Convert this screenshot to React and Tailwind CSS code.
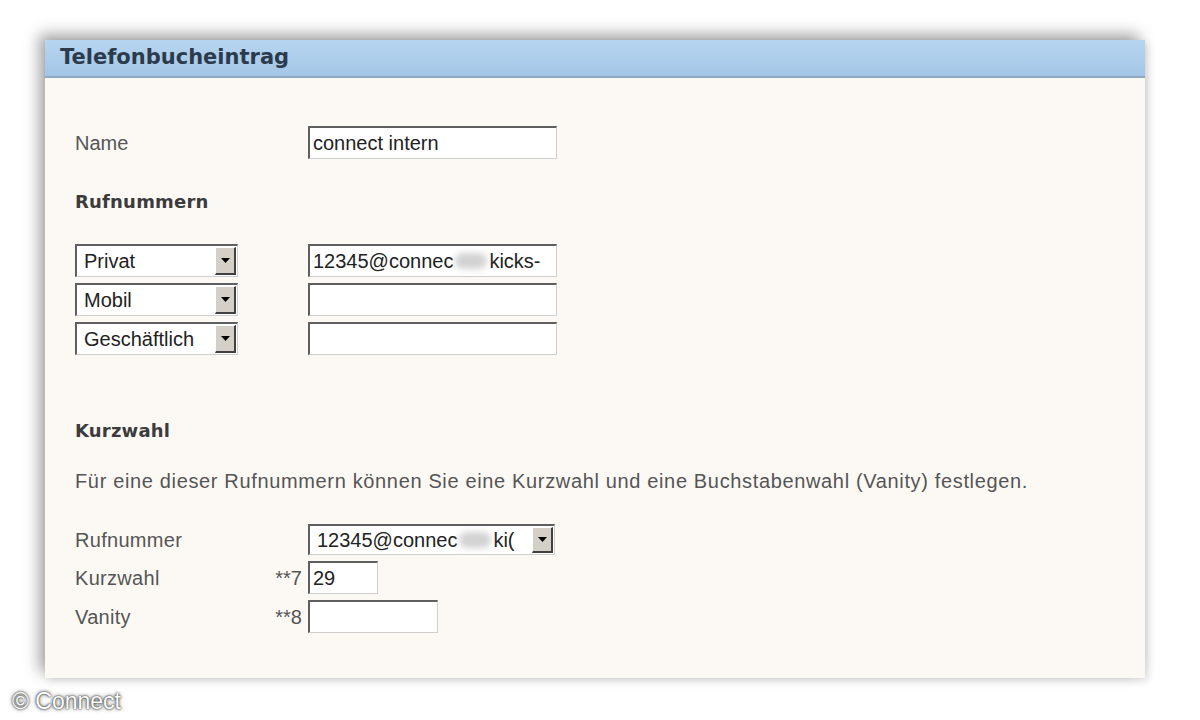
import React from 'react';

const Arrow = () => (
    <div className="w-[21px] self-stretch my-[1px] mr-[1px] bg-[#d4d0c8] border-t border-l border-t-white border-l-white border-r-2 border-b-2 border-r-[#404040] border-b-[#404040] flex items-center justify-center">
        <svg width="9" height="5" viewBox="0 0 9 5">
            <path d="M0 0h9L4.5 5z" fill="#000" />
        </svg>
    </div>
);

const Select = ({ width, height = 'h-[33px]', children }) => (
    <div className={`${width} ${height} flex items-stretch bg-white border-t-2 border-l-2 border-t-[#5f5f5f] border-l-[#5f5f5f] border-r border-b border-r-[#cfcfcf] border-b-[#cfcfcf]`}>
        <div className="flex-1 overflow-hidden whitespace-nowrap pl-[7px] flex items-center text-[20px] text-[#222]">{children}</div>
        <Arrow />
    </div>
);

const Input = ({ width, children }) => (
    <div className={`${width} h-[33px] bg-white border-t-2 border-l-2 border-t-[#5f5f5f] border-l-[#5f5f5f] border-r border-b border-r-[#cfcfcf] border-b-[#cfcfcf] pl-[3px] flex items-center overflow-hidden whitespace-nowrap text-[20px] text-[#222]`}>
        {children}
    </div>
);

const Blur = ({ w }) => (
    <span className={`inline-block ${w} h-[16px] mx-[2px] bg-[#d2d2d2] blur-[3px] rounded-full`}></span>
);

export default function App() {
    return (
        <div className="relative w-[1200px] h-[720px] bg-white overflow-hidden font-['Liberation_Sans',Arial,sans-serif]">
            <div className="pt-[40px] pl-[45px]">
                <div className="w-[1100px] h-[638px] bg-[#fcf9f5] shadow-[-6px_-6px_14px_rgba(0,0,0,0.35),3px_3px_8px_rgba(0,0,0,0.12)]">
                    {/* Header */}
                    <div className="h-[38px] bg-gradient-to-b from-[#b6d5f0] to-[#a3c6e6] border-b-2 border-[#8fa9c2] pl-[15px] flex items-center">
                        <h1 className="font-['DejaVu_Sans',sans-serif] font-bold text-[21px] text-[#2c3b4c]">Telefonbucheintrag</h1>
                    </div>

                    {/* Body */}
                    <div className="pl-[30px] pt-[48px] text-[20px] text-[#555]">
                        <div className="flex items-center">
                            <span className="w-[233px]">Name</span>
                            <Input width="w-[249px]">connect intern</Input>
                        </div>

                        <h2 className="mt-[31px] h-[24px] leading-[24px] font-['DejaVu_Sans',sans-serif] font-bold text-[18px] text-[#3c3c3c] tracking-[0.2px]">Rufnummern</h2>

                        <div className="mt-[30px] flex flex-col gap-[6px]">
                            <div className="flex items-center">
                                <div className="w-[233px]"><Select width="w-[163px]">Privat</Select></div>
                                <Input width="w-[249px]">
                                    <span>12345@connec</span><Blur w="w-[32px]" /><span>kicks-</span>
                                </Input>
                            </div>
                            <div className="flex items-center">
                                <div className="w-[233px]"><Select width="w-[163px]">Mobil</Select></div>
                                <Input width="w-[249px]"></Input>
                            </div>
                            <div className="flex items-center">
                                <div className="w-[233px]"><Select width="w-[163px]">Geschäftlich</Select></div>
                                <Input width="w-[249px]"></Input>
                            </div>
                        </div>

                        <h2 className="mt-[64px] h-[24px] leading-[24px] font-['DejaVu_Sans',sans-serif] font-bold text-[18px] text-[#3c3c3c] tracking-[0.2px]">Kurzwahl</h2>

                        <p className="mt-[26px] h-[24px] leading-[24px] tracking-[0.65px]">Für eine dieser Rufnummern können Sie eine Kurzwahl und eine Buchstabenwahl (Vanity) festlegen.</p>

                        <div className="mt-[31px] flex flex-col gap-[6px]">
                            <div className="flex items-center">
                                <span className="w-[233px] tracking-[0.3px]">Rufnummer</span>
                                <Select width="w-[247px]" height="h-[31px]">
                                    <span>12345@connec</span><Blur w="w-[32px]" /><span>ki(</span>
                                </Select>
                            </div>
                            <div className="flex items-center">
                                <div className="w-[233px] flex justify-between pr-[6px]">
                                    <span className="tracking-[0.3px]">Kurzwahl</span>
                                    <span>**7</span>
                                </div>
                                <Input width="w-[70px]">29</Input>
                            </div>
                            <div className="flex items-center">
                                <div className="w-[233px] flex justify-between pr-[6px]">
                                    <span className="tracking-[0.3px]">Vanity</span>
                                    <span>**8</span>
                                </div>
                                <Input width="w-[130px]"></Input>
                            </div>
                        </div>
                    </div>
                </div>
            </div>

            {/* Watermark */}
            <div className="absolute left-[12px] top-[684px] text-[23px] text-white [text-shadow:0_0_2px_#000,0_0_4px_#555]">
                © Connect
            </div>
        </div>
    );
}
